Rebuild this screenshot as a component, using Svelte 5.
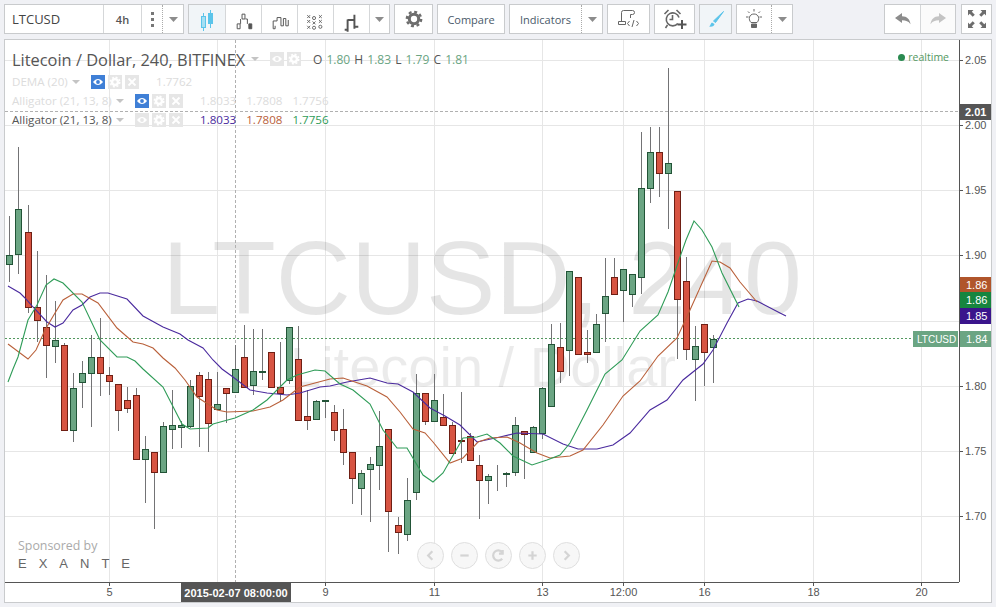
<script>
  // [top, bottom, wickTop, wickBottom, up]
  const rows = [
    [255,264,216,282,1],[209,254,147,274,1],[232,307,205,313,0],[307,320,251,342,0],[327,345,275,378,0],
    [340,346,301,363,1],[345,430,343,430,0],[388,430,373,442,1],[373,382,361,408,1],[357,373,335,427,1],
    [357,373,318,396,0],[375,381,367,395,0],[384,410,384,431,0],[400,408,387,413,0],[395,459,388,459,0],
    [449,459,436,503,1],[452,472,452,529,0],[426,472,422,472,1],[425,429,390,449,1],[425,427,421,448,1],
    [386,426,380,428,1],[375,396,372,447,0],[379,423,372,452,0],[404,409,372,409,1],[388,393,388,423,0],
    [369,392,345,392,1],[357,387,325,387,0],[371,385,329,395,1],[371,372,329,380,1],[352,387,352,387,0],
    [387,393,342,402,0],[327,380,327,384,1],[359,420,326,420,0],[416,420,390,430,0],[401,419,400,419,1],
    [400,401,400,418,1],[412,430,405,441,0],[429,452,409,465,0],[452,478,452,504,0],[473,488,470,515,1],
    [464,469,457,522,1],[446,465,411,490,1],[429,511,429,552,0],[525,532,517,554,0],[500,534,478,541,1],
    [393,492,374,500,1],[393,421,393,425,0],[400,421,374,421,1],[417,425,394,425,0],[425,453,422,453,0],
    [440,441,392,463,0],[436,460,433,460,0],[465,480,455,519,0],[476,480,474,504,1],[474,474,465,491,1],
    [473,474,472,487,1],[425,472,417,476,1],[431,434,431,479,0],[427,452,426,452,1],[388,433,387,439,1],
    [344,406,324,407,1],[347,371,323,383,0],[271,350,271,376,1],[277,354,277,354,0],[352,354,330,363,0],
    [324,352,314,353,1],[296,313,258,342,1],[277,294,258,295,0],[269,290,269,322,1],[274,294,274,307,1],
    [188,277,132,294,1],[152,188,127,203,1],[152,173,127,197,0],[163,173,68,229,1],[191,299,191,359,0],
    [281,349,257,360,0],[346,359,326,401,1],[324,352,324,386,0],[339,347,335,383,1]
  ];
  const candles = rows.map(([top, bottom, wickTop, wickBottom, up], n) => ({
    x: 9.5 + 9 * n + (n >= 2 ? 1 : 0) + (n >= 43 ? 1 : 0),
    top, bottom, wickTop, wickBottom, up
  }));

  const jaw = '8,286 20,293 25,298 33,307 47,322 55,327 63,323 73,310 82,305 90,297 100,293 108,293 127,299 143,316 163,327 180,334 188,340 203,348 213,360 222,369 233,377 250,390 267,393 287,395 300,393 320,387 330,386 347,382 370,378 387,383 398,384 413,392 430,408 445,416 460,425 477,442 500,437 517,433 543,434 563,444 578,449 597,449 613,445 630,433 650,410 667,400 683,380 703,364 713,350 727,323 738,303 748,299 757,301 780,313 786,316';
  const teeth = '8,344 28,359 36,350 45,330 55,313 63,300 73,294 82,294 98,303 117,328 133,342 143,344 153,348 163,358 175,368 185,380 197,397 217,410 227,412 253,411 270,407 283,400 300,387 330,379 343,378 367,386 387,397 400,412 413,429 425,433 433,442 450,463 463,458 478,442 490,438 507,437 520,443 537,453 550,458 570,456 583,450 603,425 623,396 640,381 658,356 677,338 690,310 712,261 720,262 730,268 740,282 757,302';
  const lips = '8,382 13,369 18,357 28,320 37,305 46,285 54,279 63,283 82,302 100,340 117,357 127,357 135,361 143,369 163,387 182,424 190,429 208,428 213,424 235,418 253,410 267,400 287,380 297,375 315,370 325,371 340,384 353,390 370,404 383,430 397,448 407,448 423,475 433,482 443,473 463,438 477,437 487,434 500,443 513,456 532,465 547,460 560,455 570,443 587,410 605,374 622,360 640,331 658,315 668,292 680,257 686,240 694,221 702,230 712,247 722,273 739,307';

  const hGrid = [60, 125, 190, 255, 321, 386, 451, 516];
  const vGrid = [109, 217, 325, 434, 542, 623, 704, 813, 921];
  const prices = [[2.05, 60], [2.0, 125], [1.95, 190], [1.9, 255], [1.8, 386], [1.75, 451], [1.7, 516]];
  const times = [['5', 109], ['9', 325], ['11', 434], ['13', 542], ['12:00', 623], ['16', 704], ['18', 813], ['20', 921]];
  const tags = [
    ['1.86', 277, '#b0552b'], ['1.86', 292, '#16853f'], ['1.85', 308, '#3a158c'], ['1.84', 331, '#6ba583']
  ];
  const navs = ['M15.5 9 11 13.5l4.5 4.5', 'M9 13.5h9', 'M17.5 10a5.5 5.5 0 1 0 0 7M18 7.5v4h-4', 'M9 13.5h9M13.500 9v9', 'M11.500 9 16 13.5 11.500 18'];
</script>

{#snippet eye(on)}
  <span class="chip" class:on>
    <svg viewBox="0 0 14 14" width="14" height="14"><path d="M2 7c3-4 7-4 10 0-3 4-7 4-10 0z" fill="#fff" /><circle cx="7" cy="7" r="1.900" fill={on ? '#3f7fd6' : '#e6e6e6'} /></svg>
  </span>
{/snippet}
{#snippet cog()}
  <span class="chip">
    <svg viewBox="0 0 14 14" width="14" height="14"><circle cx="7" cy="7" r="3" fill="none" stroke="#fff" stroke-width="2.500" /><circle cx="7" cy="7" r="4.800" fill="none" stroke="#fff" stroke-width="1.400" stroke-dasharray="2 1.770" /></svg>
  </span>
{/snippet}
{#snippet cross()}
  <span class="chip">
    <svg viewBox="0 0 14 14" width="14" height="14"><path d="M3.500 3.500l7 7m0-7l-7 7" stroke="#fff" stroke-width="1.800" /></svg>
  </span>
{/snippet}
{#snippet caret()}
  <svg class="caret" viewBox="0 0 9 5" width="9" height="5"><path d="M0 0h9L4.500 5z" /></svg>
{/snippet}
{#snippet smallCaret()}
  <svg class="small-caret" viewBox="0 0 8 4" width="8" height="4"><path d="M0 0h8L4 4z" /></svg>
{/snippet}

<div class="screen">
  <div class="toolbar">
    <div class="group">
      <div class="btn symbol">LTCUSD</div>
      <div class="btn interval">4h</div>
      <div class="btn dots"><i></i><i></i><i></i></div>
      <div class="btn more dotted">{@render caret()}</div>
    </div>
    <div class="group">
      <div class="btn type active">
        <svg viewBox="0 0 36 29" width="36" height="29"><path d="M14.500 8v18M21.500 5v18" stroke="#5bc4ea" /><rect x="12.500" y="11.500" width="4" height="11" fill="#a5dff3" stroke="#5bc4ea" /><rect x="19" y="8" width="5" height="11" fill="#5bc4ea" /></svg>
      </div>
      <div class="btn type">
        <svg viewBox="0 0 36 29" width="36" height="29" fill="none" stroke="#555"><path d="M11.500 24v-5h3v5zM15 19v-5M16.500 14V9h3v5M20 14h2v5" /><path d="M23.500 19h3v5h-3z" fill="#555" /><path d="M19.500 14h-3" /></svg>
      </div>
      <div class="btn type">
        <svg viewBox="0 0 36 29" width="36" height="29" fill="none" stroke="#555"><path d="M11.500 24v-8h4V12.500h4V21h2.500v-7.500h2.500V21h2.500v-6" /><path d="M11.500 24h2v-3" /></svg>
      </div>
      <div class="btn type">
        <svg viewBox="0 0 36 29" width="36" height="29" fill="none" stroke="#666"><path d="M9.500 10l3 3m0-3l-3 3M21.500 10l3 3m0-3l-3 3M9.500 15l3 3m0-3l-3 3M21.500 15l3 3m0-3l-3 3M15 16.500l3 3m0-3l-3 3M9.500 21l3 3m0-3l-3 3" /><circle cx="16.500" cy="13" r="1.600" /><circle cx="23" cy="22" r="1.600" /><circle cx="16.500" cy="23" r="1.600" /></svg>
      </div>
      <div class="btn type">
        <svg viewBox="0 0 36 29" width="36" height="29" fill="none" stroke="#555" stroke-width="2"><path d="M14 14.500V27M14 25h-3M14 15h6M21 9.500V24M21 22h4" /></svg>
      </div>
      <div class="btn more narrow">{@render caret()}</div>
    </div>
    <div class="group">
      <div class="btn gear">
        <svg viewBox="0 0 20 20" width="18" height="18"><circle cx="10" cy="10" r="5.200" fill="none" stroke="#6d6d6d" stroke-width="3.400" /><circle cx="10" cy="10" r="8" fill="none" stroke="#6d6d6d" stroke-width="2.600" stroke-dasharray="3.300 2.980" /></svg>
      </div>
    </div>
    <div class="group"><div class="btn compare">Compare</div></div>
    <div class="group">
      <div class="btn indicators">Indicators</div>
      <div class="btn more dotted">{@render caret()}</div>
    </div>
    <div class="group">
      <div class="btn script">
        <svg viewBox="0 0 24 20" width="24" height="20" fill="none" stroke="#666"><path d="M4.500 12V3.500a2 2 0 0 1 2-2h9a2 2 0 0 1 0 4h-2V9M1.500 12.500h7v3h-7zM12.500 12l-2 2.500 2 2.500M19.500 12l2 2.500-2 2.500M17 11l-2 7" /></svg>
      </div>
    </div>
    <div class="group">
      <div class="btn alarm">
        <svg viewBox="0 0 24 22" width="24" height="22" fill="none" stroke="#666" stroke-width="1.600"><path d="M14.800 15.500A6.500 6.500 0 1 1 16 9.500M1.500 6 5.500 2M13.500 2l4 4M9.500 7v4.500h-3M4.500 17l-2 3" /><path d="M19 12v9M14.500 16.500h9" stroke="#555" stroke-width="2" /></svg>
      </div>
    </div>
    <div class="group">
      <div class="btn brush active">
        <svg viewBox="0 0 18 18" width="18" height="18"><path d="M16.500 1.500 6.500 11l2 1.500z" fill="#5bc4ea" stroke="#5bc4ea" /><path d="M5 12.500c-1.500 1-1 2.500-3 4 3 .5 5.500-.5 5.500-2.500z" fill="#5bc4ea" /></svg>
      </div>
    </div>
    <div class="group">
      <div class="btn bulb">
        <svg viewBox="0 0 20 22" width="20" height="22" fill="none" stroke="#666"><path d="M7 14.500c-3-3-2-8.500 3-8.500s6 5.500 3 8.500z" /><path d="M7.500 16h5v3.500h-5z" fill="#666" /><path d="M10 1v2.500M2 9h2.500M15.500 9H18M4 3.500 5.500 5M16 3.500 14.500 5" /></svg>
      </div>
      <div class="btn more dotted">{@render caret()}</div>
    </div>
    <div class="group undo">
      <div class="btn history">
        <svg viewBox="0 0 18 14" width="18" height="14"><path d="M1 6 8 1v3.200c5 0 8 3 8.500 8-2-3-4.500-4-8.500-4V11z" fill="#8c8c8c" /></svg>
      </div>
      <div class="btn history faint">
        <svg viewBox="0 0 18 14" width="18" height="14"><path d="M17 6l-7-5v3.200c-5 0-8 3-8.500 8 2-3 4.500-4 8.500-4V11z" fill="#c4c4c4" /></svg>
      </div>
    </div>
    <div class="group">
      <div class="btn full">
        <svg viewBox="0 0 18 18" width="18" height="18" fill="#6d6d6d">
          {#each [0, 90, 180, 270] as angle}
            <path transform="rotate({angle} 9 9)" d="M0 0h5.500L3.800 1.700 6.800 4.700 4.700 6.800 1.700 3.800 0 5.500z" />
          {/each}
        </svg>
      </div>
    </div>
  </div>

  <div class="chart">
    <svg class="plot" viewBox="5 40 986 562" width="986" height="562">
      <g class="grid">
        {#each hGrid as y}<line x1="5" x2="959" y1={y + 0.5} y2={y + 0.5} />{/each}
        {#each vGrid as x}<line y1="40" y2="582" x1={x + 0.5} x2={x + 0.5} />{/each}
      </g>
      <text class="mark-big" x="482" y="314" text-anchor="middle">LTCUSD, 240</text>
      <text class="mark-small" x="483" y="386" text-anchor="middle">Litecoin / Dollar</text>

      <line class="cross" x1="5" x2="959" y1="111.500" y2="111.500" />
      <line class="cross" x1="235.500" x2="235.500" y1="40" y2="582" />
      <line class="last" x1="5" x2="914" y1="338.500" y2="338.500" />

      <g class="candles">
        {#each candles as c}
          <line class="wick" x1={c.x} x2={c.x} y1={c.wickTop} y2={c.wickBottom} />
          <rect class={c.up ? 'up' : 'down'} x={c.x - 3} y={c.top + 0.5} width="6" height={c.bottom - c.top} />
        {/each}
      </g>

      <polyline class="ma" points={jaw} stroke="#4a2a9e" />
      <polyline class="ma" points={teeth} stroke="#b9603a" />
      <polyline class="ma" points={lips} stroke="#2f9c58" />

      <line class="axis" x1="959.500" x2="959.500" y1="40" y2="582" />
      <line class="axis" x1="5" x2="959" y1="582.500" y2="582.500" />
      {#each prices as [p, y]}
        <line class="axis" x1="960" x2="963" y1={y + 0.5} y2={y + 0.5} />
        <text class="tick" x="965" y={y + 4}>{p.toFixed(2)}</text>
      {/each}
      {#each times as [t, x]}
        <line class="axis" x1={x + 0.5} x2={x + 0.5} y1="583" y2="586" />
        <text class="tick" x={x + 0.5} y="596" text-anchor="middle">{t}</text>
      {/each}

      {#each tags as [v, y, fill]}
        <rect x="960" y={y} width="31" height="16" fill={fill} />
        <text class="tag" x="966" y={y + 12}>{v}</text>
      {/each}
      <rect x="913" y="331" width="45" height="16" fill="#6ba583" />
      <text class="tag code" x="917" y="343">LTCUSD</text>
      <rect x="960" y="104" width="31" height="16" fill="#555" />
      <text class="tag strong" x="965" y="116">2.01</text>
      <rect x="181" y="583" width="110" height="19" fill="#555" />
      <text class="tag strong" x="236" y="597" text-anchor="middle">2015-02-07 08:00:00</text>
    </svg>

    <div class="legend">
      <div class="row title">
        <span class="name">Litecoin / Dollar, 240, BITFINEX</span>
        {@render smallCaret()}
        {@render eye(false)}
        {@render cog()}
        <span class="ohlc"><b>O</b> <em>1.80</em> <b>H</b> <em>1.83</em> <b>L</b> <em>1.79</em> <b>C</b> <em>1.81</em></span>
      </div>
      <div class="row study faded">
        <span class="name">DEMA (20)</span>
        {@render smallCaret()}
        {@render eye(true)}
        {@render cog()}
        {@render cross()}
        <span class="value first">1.7762</span>
      </div>
      <div class="row study faded">
        <span class="name">Alligator (21, 13, 8)</span>
        {@render smallCaret()}
        {@render eye(true)}
        {@render cog()}
        {@render cross()}
        <span class="value first">1.8033</span>
        <span class="value">1.7808</span>
        <span class="value">1.7756</span>
      </div>
      <div class="row study">
        <span class="name">Alligator (21, 13, 8)</span>
        {@render smallCaret()}
        {@render eye(false)}
        {@render cog()}
        {@render cross()}
        <span class="value first jaw">1.8033</span>
        <span class="value teeth">1.7808</span>
        <span class="value lips">1.7756</span>
      </div>
    </div>

    <div class="realtime"><i></i>realtime</div>

    <div class="sponsor">
      <div class="by">Sponsored by</div>
      <div class="brand">EXANTE</div>
    </div>

    <div class="nav">
      {#each navs as d}
        <span class="circle">
          <svg viewBox="0 0 27 27" width="27" height="27"><path {d} fill="none" stroke="#d4d4d4" stroke-width="2.400" /></svg>
        </span>
      {/each}
    </div>
  </div>
</div>

<style>
  :global(body) {
    background: #f0f1f5;
    font-family: "Open Sans", sans-serif;
  }

  .screen {
    width: 996px;
    height: 607px;
    overflow: hidden;
  }

  .toolbar {
    display: flex;
    height: 30px;
    padding: 4px 0 5px 4px;
    gap: 4px;
  }

  .group {
    display: flex;
    height: 30px;
    box-sizing: border-box;
    border: 1px solid #c9cbcd;
    background: #fff;
  }

  .group.undo {
    margin-left: 87px;
    margin-right: 1px;
  }

  .btn {
    display: flex;
    align-items: center;
    justify-content: center;
    height: 28px;
    box-sizing: border-box;
    font-size: 11px;
    color: #4a5a6a;
  }

  .btn + .btn {
    border-left: 1px solid #d5d7d9;
  }

  .btn.dotted {
    border-left: 1px dotted #aaa;
  }

  .btn.active {
    background: #f1f5f8;
  }

  .symbol {
    width: 98px;
    justify-content: flex-start;
    padding-left: 7px;
    font-size: 13px;
    color: #444;
  }

  .interval {
    width: 38px;
    font-weight: 600;
    color: #555;
  }

  .dots {
    width: 21px;
    flex-direction: column;
    gap: 3px;
  }

  .dots i {
    width: 3px;
    height: 3px;
    background: #777;
  }

  .more {
    width: 21px;
  }

  .more.narrow {
    width: 20px;
  }

  .caret {
    fill: #8c8c8c;
  }

  .type {
    width: 36px;
  }

  .gear {
    width: 37px;
  }

  .compare {
    width: 66px;
  }

  .indicators {
    width: 71px;
  }

  .script {
    width: 41px;
  }

  .alarm {
    width: 39px;
  }

  .brush {
    width: 31px;
  }

  .bulb {
    width: 34px;
  }

  .history {
    width: 35px;
  }

  .history.faint {
    background: #fbfbfb;
  }

  .full {
    width: 29px;
  }

  .chart {
    position: relative;
    width: 986px;
    height: 562px;
    margin-left: 4px;
    border: 1px solid #c9cbcd;
    background: #fff;
  }

  .plot {
    display: block;
  }

  .grid line {
    stroke: #e6e6e6;
    shape-rendering: crispEdges;
  }

  .mark-big {
    font: 104px "Liberation Sans", sans-serif;
    fill: rgba(0, 0, 0, 0.1);
  }

  .mark-small {
    font: 56px "Liberation Sans", sans-serif;
    fill: rgba(0, 0, 0, 0.08);
  }

  .cross {
    stroke: #b0b0b0;
    stroke-dasharray: 3 2;
    shape-rendering: crispEdges;
  }

  .last {
    stroke: #53985f;
    stroke-dasharray: 2 2;
    shape-rendering: crispEdges;
  }

  .wick {
    stroke: #737375;
    shape-rendering: crispEdges;
  }

  .candles rect {
    shape-rendering: crispEdges;
  }

  .up {
    fill: #6ba583;
    stroke: #225437;
  }

  .down {
    fill: #d75442;
    stroke: #6f1f14;
  }

  .ma {
    fill: none;
    stroke-width: 1.100;
  }

  .axis {
    stroke: #555;
    shape-rendering: crispEdges;
  }

  .tick {
    font: 11px "Liberation Sans", sans-serif;
    fill: #555;
  }

  .tag {
    font: 11px "Liberation Sans", sans-serif;
    fill: #fff;
  }

  .tag.code {
    font-size: 10px;
  }

  .tag.strong {
    font-weight: 700;
  }

  .legend {
    position: absolute;
    left: 7px;
    top: 9px;
    display: flex;
    flex-direction: column;
  }

  .row {
    display: flex;
    align-items: center;
    height: 19.200px;
    font-size: 11.600px;
    color: #555;
    white-space: nowrap;
  }

  .row.title {
    height: 20px;
    margin-bottom: 3px;
  }

  .title .name {
    font-size: 16.400px;
    width: 234px;
  }

  .small-caret {
    fill: #c4c4c4;
    margin: 0 11px 0 5px;
  }

  .chip {
    display: flex;
    width: 14px;
    height: 14px;
    margin-right: 3px;
    background: #e6e6e6;
  }

  .chip.on {
    background: #3f7fd6;
  }

  .ohlc {
    margin-left: 9px;
    font-size: 12px;
    word-spacing: 1px;
  }

  .ohlc b {
    font-weight: 400;
  }

  .ohlc em {
    font-style: normal;
    color: #6ba583;
  }

  .faded,
  .faded .value {
    color: #dcdcdc;
  }

  .study .name {
    width: 99px;
  }

  .faded:nth-child(2) .name {
    width: 55px;
  }

  .value {
    margin-left: 10px;
  }

  .value.first {
    margin-left: 14px;
  }

  .jaw {
    color: #4a2a9e;
  }

  .teeth {
    color: #b9603a;
  }

  .lips {
    color: #2f9c58;
  }

  .realtime {
    position: absolute;
    right: 42px;
    top: 10px;
    display: flex;
    align-items: center;
    gap: 3px;
    font-size: 10.500px;
    color: #53985f;
  }

  .realtime i {
    width: 7px;
    height: 7px;
    border-radius: 50%;
    background: #2a8a50;
  }

  .sponsor {
    position: absolute;
    left: 13px;
    top: 497px;
  }

  .by {
    font-size: 12.400px;
    color: #aaa;
  }

  .brand {
    margin-top: 2px;
    font: 13px "Liberation Sans", sans-serif;
    letter-spacing: 12px;
    color: #666;
  }

  .nav {
    position: absolute;
    left: 412px;
    top: 502px;
    display: flex;
    gap: 7px;
  }

  .circle {
    display: flex;
    width: 27px;
    height: 27px;
    box-sizing: border-box;
    border: 1px solid #dfdfdf;
    border-radius: 50%;
    background: #f7f7f7;
    align-items: center;
    justify-content: center;
  }
</style>
